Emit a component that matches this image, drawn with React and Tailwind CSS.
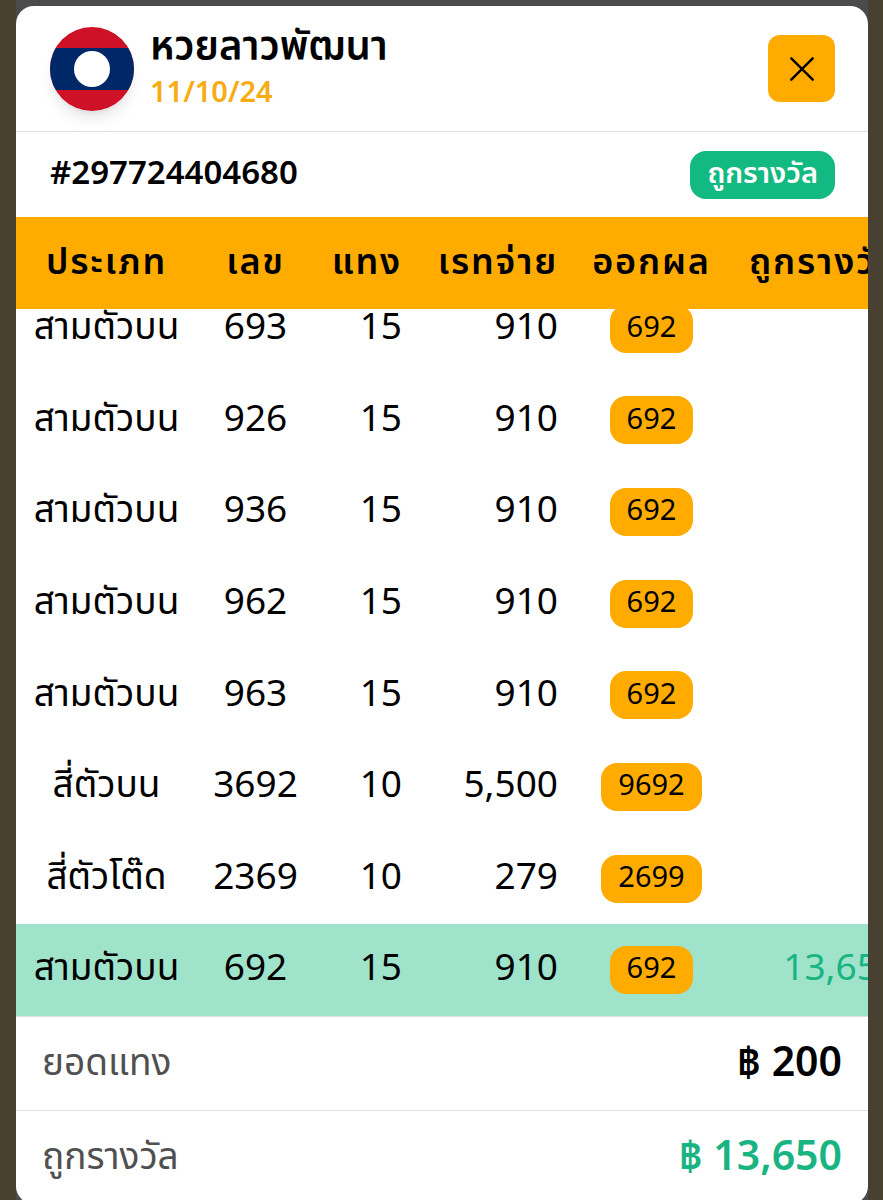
import { useEffect, useRef } from 'react';

const bets = [
  { type: 'สามตัวบน', number: '693', amount: '15', rate: '910', result: '692' },
  { type: 'สามตัวบน', number: '926', amount: '15', rate: '910', result: '692' },
  { type: 'สามตัวบน', number: '936', amount: '15', rate: '910', result: '692' },
  { type: 'สามตัวบน', number: '962', amount: '15', rate: '910', result: '692' },
  { type: 'สามตัวบน', number: '963', amount: '15', rate: '910', result: '692' },
  { type: 'สี่ตัวบน', number: '3692', amount: '10', rate: '5,500', result: '9692' },
  { type: 'สี่ตัวโต๊ด', number: '2369', amount: '10', rate: '279', result: '2699' },
  { type: 'สามตัวบน', number: '692', amount: '15', rate: '910', result: '692', prize: '13,650' },
];

function LaosFlag() {
  return (
    <svg viewBox="0 0 84 84" className="size-21 rounded-full shadow-lg" role="img" aria-label="ลาว">
      <rect width="84" height="84" fill="#ce1126" />
      <rect y="21" width="84" height="42" fill="#002868" />
      <circle cx="42" cy="42" r="18" fill="#fff" />
    </svg>
  );
}

function CloseIcon() {
  return (
    <svg viewBox="0 0 24 24" className="size-6" fill="none" stroke="currentColor" strokeWidth="2.4" strokeLinecap="round">
      <path d="M1.3 1.3 22.7 22.7M22.7 1.3 1.3 22.7" />
    </svg>
  );
}

function Header() {
  return (
    <header className="flex h-[126px] shrink-0 items-center justify-between border-b border-[#e0e0e0] pr-[33px] pl-[34px]">
      <div className="flex items-center gap-4">
        <LaosFlag />
        <div className="pb-2">
          <h1 className="text-[40px] leading-[52px] font-semibold">หวยลาวพัฒนา</h1>
          <p className="text-[29px] leading-[40px] font-semibold text-[#f8ac14]">11/10/24</p>
        </div>
      </div>
      <button type="button" aria-label="ปิด" className="flex size-[67px] items-center justify-center rounded-xl bg-[#ffab00]">
        <CloseIcon />
      </button>
    </header>
  );
}

function BetTable() {
  const scroller = useRef(null);

  // open on the latest bets, with the winning one in view
  useEffect(() => {
    scroller.current.scrollTop = scroller.current.scrollHeight;
  }, []);

  return (
    <div ref={scroller} className="min-h-0 flex-1 overflow-auto [scrollbar-width:none]">
      <table className="h-[825px] w-[900px] table-fixed border-separate border-spacing-0 text-[37px]">
        <colgroup>
          <col className="w-[181px]" />
          <col className="w-[117px]" />
          <col className="w-[105px]" />
          <col className="w-[156px]" />
          <col className="w-[153px]" />
          <col className="w-[188px]" />
        </colgroup>
        <thead className="sticky top-0 z-10 bg-[#ffab00]">
          <tr className="h-[92px] text-[36px] tracking-wider whitespace-nowrap">
            <th scope="col" className="pb-1 font-semibold">ประเภท</th>
            <th scope="col" className="pb-1 font-semibold">เลข</th>
            <th scope="col" className="px-[17px] pb-1 text-right font-semibold">แทง</th>
            <th scope="col" className="px-[17px] pb-1 text-right font-semibold">เรทจ่าย</th>
            <th scope="col" className="pb-1 font-semibold">ออกผล</th>
            <th scope="col" className="px-[17px] pb-1 text-right font-semibold">ถูกรางวัล</th>
          </tr>
        </thead>
        <tbody>
          {bets.map((bet) => (
            <tr key={bet.number} className={bet.prize ? 'bg-[#9fe3cb]' : 'bg-white'}>
              <td className="pb-2 text-center whitespace-nowrap">{bet.type}</td>
              <td className="pb-2 text-center">{bet.number}</td>
              <td className="px-[17px] pb-2 text-right">{bet.amount}</td>
              <td className="px-[17px] pb-2 text-right">{bet.rate}</td>
              <td>
                <div className="flex justify-center">
                  <span className="flex h-12 items-center rounded-2xl bg-[#ffab00] px-[17px] pb-1.5 text-[29px]">
                    {bet.result}
                  </span>
                </div>
              </td>
              <td className="px-[17px] pb-2 text-right text-[#19b481]">{bet.prize}</td>
            </tr>
          ))}
        </tbody>
      </table>
    </div>
  );
}

function TotalRow({ label, value, className }) {
  return (
    <div className="flex h-[94px] items-center justify-between border-t border-[#e0e0e0] px-[26px] pb-1.5">
      <dt className="text-[37px] text-[#505050]">{label}</dt>
      <dd className={className}>{value}</dd>
    </div>
  );
}

export default function App() {
  return (
    <div className="h-screen overflow-hidden bg-[#484030] pr-[15px] pl-4 font-['Noto_Sans','Noto_Sans_Thai',sans-serif] text-black">
      <div className="bg-[#4b4b4b] pt-1.5">
        <main className="flex h-[calc(100vh-2px)] flex-col overflow-hidden rounded-[18px] bg-white">
          <Header />
          <div className="flex h-[85px] shrink-0 items-center justify-between pr-[33px] pl-[34px]">
            <h2 className="pb-1.5 text-[33px] font-semibold">#297724404680</h2>
            <span className="flex h-12 items-center rounded-2xl bg-[#12b981] px-[17px] pb-1.5 text-[29px] font-semibold text-white">
              ถูกรางวัล
            </span>
          </div>
          <BetTable />
          <dl className="shrink-0">
            <TotalRow label="ยอดแทง" value="฿ 200" className="text-[41px] font-semibold" />
            <TotalRow label="ถูกรางวัล" value="฿ 13,650" className="text-[41px] font-semibold text-[#19b481]" />
          </dl>
        </main>
      </div>
    </div>
  );
}
